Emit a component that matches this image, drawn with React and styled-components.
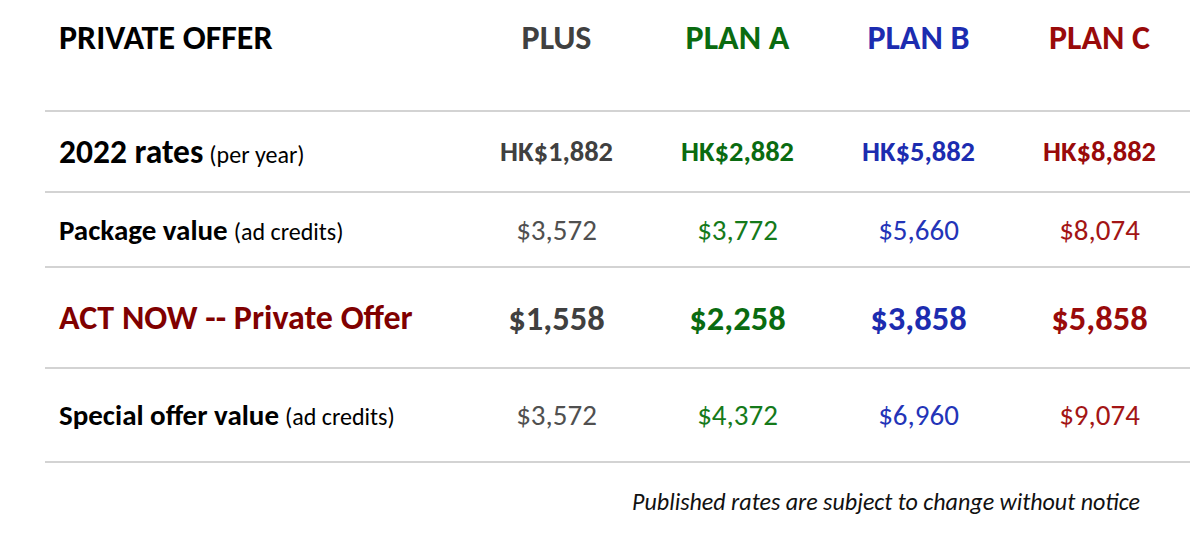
import React from "react";
import styled, { createGlobalStyle } from "styled-components";

const Global = createGlobalStyle`
  *, *::before, *::after { box-sizing: border-box; }
  html, body { margin: 0; padding: 0; background: #ffffff; }
  body { font-family: "Carlito", "Lato", "Liberation Sans", sans-serif; }
`;

const plans = [
  { name: "PLUS", color: "#404040", soft: "#505050" },
  { name: "PLAN A", color: "#0a6b10", soft: "#157a1a" },
  { name: "PLAN B", color: "#1c2cb0", soft: "#2334b8" },
  { name: "PLAN C", color: "#990a0a", soft: "#a31515" },
];

const rows = [
  {
    label: "2022 rates",
    note: "(per year)",
    values: ["HK$1,882", "HK$2,882", "HK$5,882", "HK$8,882"],
    height: 81,
    size: 28.5,
    weight: 700,
    labelSize: 33.5,
    noteSize: 24,
  },
  {
    label: "Package value",
    note: "(ad credits)",
    values: ["$3,572", "$3,772", "$5,660", "$8,074"],
    height: 75,
    size: 29,
    weight: 400,
    labelSize: 29,
    noteSize: 24,
  },
  {
    label: "ACT NOW -- Private Offer",
    values: ["$1,558", "$2,258", "$3,858", "$5,858"],
    height: 101,
    size: 34.5,
    weight: 700,
    labelSize: 34,
    accent: true,
  },
  {
    label: "Special offer value",
    note: "(ad credits)",
    values: ["$3,572", "$4,372", "$6,960", "$9,074"],
    height: 94,
    size: 29,
    weight: 400,
    labelSize: 29,
    noteSize: 24,
  },
];

const Page = styled.div`
  padding-left: 45px;
  width: 1190px;
`;

const Row = styled.div`
  display: grid;
  grid-template-columns: 421px repeat(4, 181px);
  align-items: center;
  height: ${(p) => p.$h}px;
  border-bottom: 2px solid #d3d3d3;
`;

const HeaderRow = styled(Row)`
  align-items: start;
  padding-top: 18px;
  height: 112px;
`;

const Title = styled.div`
  font-size: 34px;
  font-weight: 700;
  color: #000000;
  padding-left: 14px;
  line-height: 40px;
`;

const PlanName = styled.div`
  font-size: 34px;
  font-weight: 700;
  color: ${(p) => p.$color};
  text-align: center;
  line-height: 40px;
`;

const Label = styled.div`
  padding-left: 14px;
  color: ${(p) => (p.$accent ? "#800000" : "#000000")};
  font-size: ${(p) => p.$size}px;
  font-weight: 700;
  white-space: nowrap;
`;

const Note = styled.span`
  font-size: ${(p) => p.$size}px;
  font-weight: 400;
  margin-left: 6px;
`;

const Value = styled.div`
  text-align: center;
  font-size: ${(p) => p.$size}px;
  font-weight: ${(p) => p.$weight};
  color: ${(p) => p.$color};
`;

const Footnote = styled.div`
  text-align: right;
  padding: 24px 50px 0 0;
  font-size: 24px;
  font-style: italic;
  color: #111111;
`;

export default function App() {
  return (
    <>
      <Global />
      <Page>
        <HeaderRow>
          <Title>PRIVATE OFFER</Title>
          {plans.map((p) => (
            <PlanName key={p.name} $color={p.color}>
              {p.name}
            </PlanName>
          ))}
        </HeaderRow>
        {rows.map((r) => (
          <Row key={r.label} $h={r.height}>
            <Label $accent={r.accent} $size={r.labelSize}>
              {r.label}
              {r.note && <Note $size={r.noteSize}>{r.note}</Note>}
            </Label>
            {r.values.map((v, i) => (
              <Value
                key={v + i}
                $size={r.size}
                $weight={r.weight}
                $color={r.weight === 700 ? plans[i].color : plans[i].soft}
              >
                {v}
              </Value>
            ))}
          </Row>
        ))}
        <Footnote>Published rates are subject to change without notice</Footnote>
      </Page>
    </>
  );
}
